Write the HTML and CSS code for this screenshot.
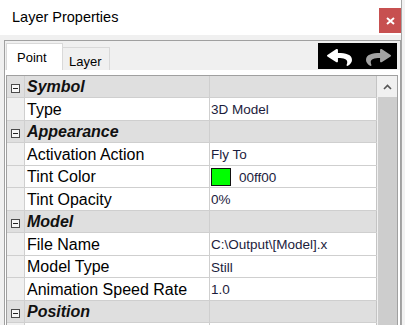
FILE: index.html
```html
<!DOCTYPE html>
<html lang="en">
<head>
  <meta charset="UTF-8" />
  <title>Layer Properties</title>
  <link rel="stylesheet" href="styles.css">
</head>
<body>

  <div class="window">
    <div class="titlebar">
      <span class="title">Layer Properties</span>
      <button class="close" type="button">
        <svg width="9" height="8" viewBox="0 0 9 8"><path d="M1 1 L8 7 M8 1 L1 7" stroke="#fff" stroke-width="2"/></svg>
      </button>
    </div>

    <div class="content">
      <div class="tabcontrol">
        <div class="tabstrip">
          <div class="tab active">Point</div>
          <div class="tab">Layer</div>
          <div class="nav">
            <svg class="arrow" viewBox="0 30 512 452" preserveAspectRatio="none">
              <path fill="#fff" d="M8.3 189.8L184.3 37.9C199.7 24.5 224 35.3 224 56v80.1c160.6 1.8 288 34 288 186.3 0 61.4-39.6 122.3-83.3 154.1-13.7 9.9-33.1-2.5-28.1-18.6 45.3-145-21.5-183.5-176.6-185.7V360c0 20.7-24.3 31.5-39.7 18.2l-176-152c-11.1-9.6-11.1-26.8 0-36.4z"/>
            </svg>
            <svg class="arrow" viewBox="0 30 512 452" preserveAspectRatio="none">
              <g transform="translate(512 0) scale(-1 1)">
                <path fill="#a3a3a3" d="M8.3 189.8L184.3 37.9C199.7 24.5 224 35.3 224 56v80.1c160.6 1.8 288 34 288 186.3 0 61.4-39.6 122.3-83.3 154.1-13.7 9.9-33.1-2.5-28.1-18.6 45.3-145-21.5-183.5-176.6-185.7V360c0 20.7-24.3 31.5-39.7 18.2l-176-152c-11.1-9.6-11.1-26.8 0-36.4z"/>
              </g>
            </svg>
          </div>
        </div>

        <div class="panel">
          <div class="grid">
            <div class="rows">
              <div class="row cat"><span class="m"><i class="box"></i></span><span class="name">Symbol</span><span class="val"></span></div>
              <div class="row"><span class="m"></span><span class="name">Type</span><span class="val">3D Model</span></div>
              <div class="row cat"><span class="m"><i class="box"></i></span><span class="name">Appearance</span><span class="val"></span></div>
              <div class="row"><span class="m"></span><span class="name">Activation Action</span><span class="val">Fly To</span></div>
              <div class="row"><span class="m"></span><span class="name">Tint Color</span><span class="val"><i class="swatch"></i>00ff00</span></div>
              <div class="row"><span class="m"></span><span class="name">Tint Opacity</span><span class="val">0%</span></div>
              <div class="row cat"><span class="m"><i class="box"></i></span><span class="name">Model</span><span class="val"></span></div>
              <div class="row"><span class="m"></span><span class="name">File Name</span><span class="val">C:\Output\[Model].x</span></div>
              <div class="row"><span class="m"></span><span class="name">Model Type</span><span class="val">Still</span></div>
              <div class="row"><span class="m"></span><span class="name">Animation Speed Rate</span><span class="val">1.0</span></div>
              <div class="row cat"><span class="m"><i class="box"></i></span><span class="name">Position</span><span class="val"></span></div>
              <div class="row"><span class="m"></span><span class="name"></span><span class="val"></span></div>
            </div>
            <div class="scrollbar">
              <div class="up">
                <svg width="9" height="6" viewBox="0 0 9 6"><path d="M1 5 L4.5 1.5 L8 5" fill="none" stroke="#555" stroke-width="1.6"/></svg>
              </div>
              <div class="thumb"></div>
            </div>
          </div>
        </div>
      </div>
    </div>
  </div>

</body>
</html>
```

FILE: styles.css
```css
html, body {
  margin: 0;
  padding: 0;
}

body {
  width: 405px;
  height: 325px;
  overflow: hidden;
  background: #f2f2f2;
  font-family: "Liberation Sans", Arial, sans-serif;
}

.window {
  width: 401px;
  height: 325px;
  border-right: 1px solid #a6a6a6;
  background: #f0f0f0;
  display: flex;
  flex-direction: column;
}

/* title bar */
.titlebar {
  height: 35px;
  flex: none;
  background: #fff;
  display: flex;
  align-items: flex-start;
}

.title {
  flex: 1;
  padding-left: 12px;
  line-height: 34px;
  font-size: 14.5px;
  color: #000;
}

.close {
  margin-top: 8px;
  width: 22px;
  height: 25px;
  border: none;
  padding: 0;
  background: #c75050;
  display: flex;
  align-items: center;
  justify-content: center;
}

/* tabs */
.content {
  flex: 1;
  padding: 5px 0 0 4px;
  display: flex;
  min-height: 0;
}

.tabcontrol {
  flex: 1;
  border-left: 1px solid #a0a0a0;
  border-top: 1px solid #a0a0a0;
  border-right: 1px solid #a0a0a0;
  display: flex;
  flex-direction: column;
  min-height: 0;
}

.tabstrip {
  height: 27px;
  padding-top: 2px;
  display: flex;
  align-items: flex-end;
  background: #f0f0f0;
}

.tab {
  font-size: 13px;
  color: #000;
  box-sizing: border-box;
}

.tab.active {
  margin-left: 1px;
  width: 57px;
  height: 27px;
  padding: 6px 0 0 10px;
  background: #fff;
  border: 1px solid #d9d9d9;
  border-bottom: none;
}

.tab:not(.active) {
  width: 47px;
  height: 23px;
  padding: 6px 0 0 6px;
  border: 1px solid #d9d9d9;
  border-left: none;
  border-bottom: none;
}

.nav {
  align-self: flex-start;
  margin-left: auto;
  margin-right: 3px;
  width: 79px;
  height: 26px;
  background: #000;
  display: flex;
  align-items: center;
  gap: 14px;
  padding: 3px 0 0 9px;
  box-sizing: border-box;
}

.arrow {
  width: 25px;
  height: 17px;
}

/* property grid */
.panel {
  flex: 1;
  background: #fff;
  padding: 5px 2px 0 1px;
  min-height: 0;
}

.grid {
  height: 100%;
  border-left: 1px solid #a0a0a0;
  border-top: 1px solid #a0a0a0;
  border-right: 1px solid #a0a0a0;
  display: flex;
  overflow: hidden;
}

.rows {
  width: 370px;
}

.row {
  height: 22px;
  display: flex;
  box-sizing: border-box;
  border-bottom: 1px solid #cfcfcf;
  background: #fff;
}

.row:nth-child(even) {
  height: 23px;
}

.m {
  width: 17px;
  border-right: 1px solid #cfcfcf;
  background: #f0f0f0;
  display: flex;
  align-items: center;
  justify-content: center;
}

.name {
  width: 182px;
  padding-left: 2px;
  border-right: 1px solid #cfcfcf;
  font-size: 16px;
  color: #000;
  display: flex;
  align-items: center;
  padding-top: 1px;
  white-space: nowrap;
}

.val {
  flex: 1;
  padding-left: 1px;
  border-right: 1px solid #c4c4c4;
  font-size: 13.5px;
  color: #1c1c3c;
  display: flex;
  align-items: center;
  padding-top: 1px;
  white-space: nowrap;
}

.row.cat {
  background: #dfdfdf;
  border-bottom-color: #cfcfcf;
}

.row.cat .m {
  background: #dfdfdf;
}

.row.cat .name {
  font-weight: bold;
  font-style: italic;
  color: #111;
}

.box {
  width: 7px;
  height: 7px;
  margin-top: 3px;
  border: 1px solid #4a4a4a;
  background: #f7f7f7;
  position: relative;
}

.box::after {
  content: "";
  position: absolute;
  left: 1px;
  right: 1px;
  top: 3px;
  height: 1px;
  background: #222;
}

.swatch {
  width: 18px;
  height: 16px;
  border: 1px solid #111;
  background: #00ff00;
  margin-right: 8px;
}

.scrollbar {
  width: 20px;
  background: #f0f0f0;
  display: flex;
  flex-direction: column;
}

.up {
  height: 21px;
  display: flex;
  align-items: center;
  justify-content: center;
}

.thumb {
  flex: 1;
  margin-left: 1px;
  background: #cdcdcd;
}
```
